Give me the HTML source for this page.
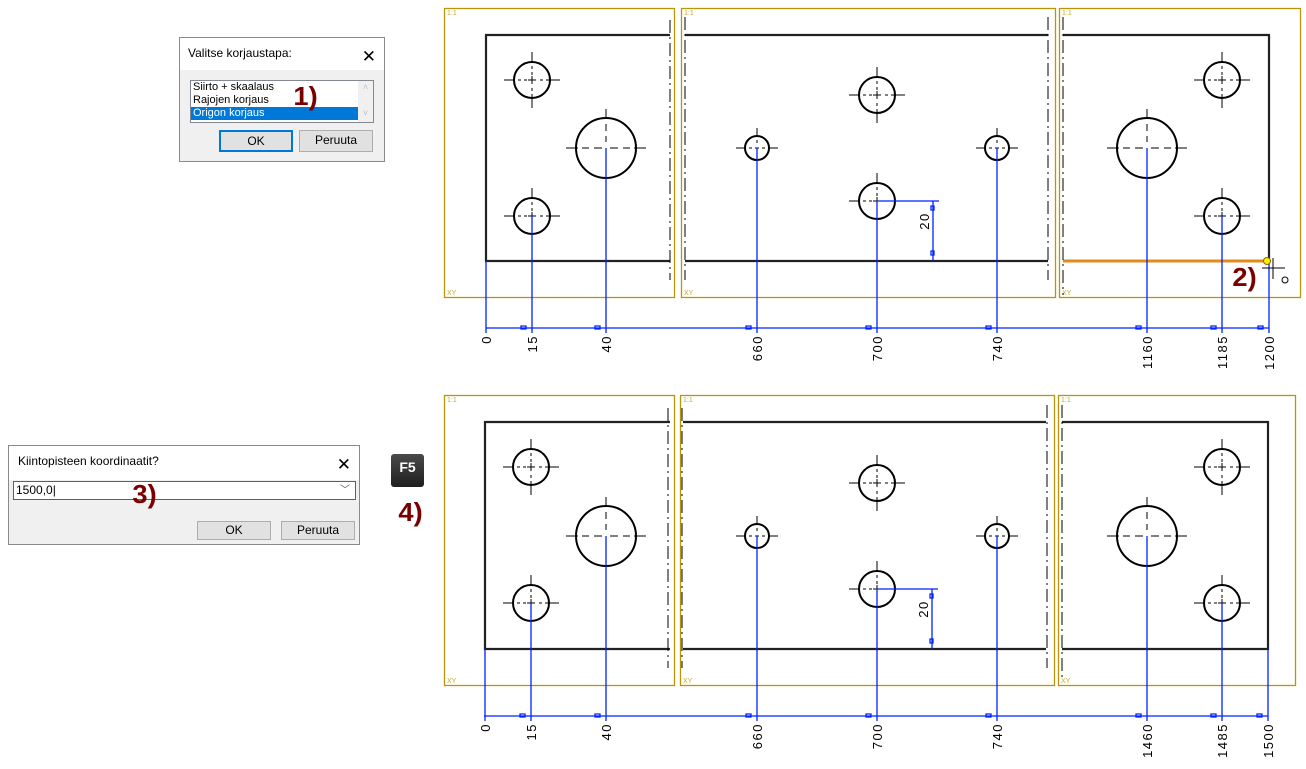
<!DOCTYPE html>
<html><head><meta charset="utf-8"><style>
body{margin:0;width:1306px;height:769px;background:#fff;overflow:hidden;position:relative;font-family:"Liberation Sans",Arial,sans-serif}
.dlg{position:absolute;background:#f0f0f0;border:1px solid #8a8a8a;box-sizing:border-box}
.tb{background:#fff;font-size:12px;color:#000;position:relative}
.x{position:absolute;right:8px;top:4px;font-size:17px;font-weight:300}
.btn{position:absolute;background:#e1e1e1;border:1px solid #adadad;box-sizing:border-box;font-size:12px;text-align:center;line-height:19px}
.lab{position:absolute;color:#7a0000;font-weight:bold;font-size:26px;transform:scaleX(1.05)}
</style></head><body>
<svg width="1306" height="769" style="position:absolute;left:0;top:0">
<defs>
<g id="c18"><circle r="18" fill="none" stroke="#000" stroke-width="2"/><path d="M-28 0h10M18 0h10M0-28v10M0 18v10M-4 0h8M0-4v8M-14 0h3M-8 0h3M8 0h3M14 0h3M0-14v3M0-8v3M0 8v3M0 14v3" stroke="#000"/></g>
<g id="c30"><circle r="30" fill="none" stroke="#000" stroke-width="2"/><path d="M-40 0h12M28 0h12M0-39v10M0 29v10M-24 0h7M-12 0h8M4 0h8M17 0h7M0-24v7M0-12v6M0 6v6M0 17v7" stroke="#000"/></g>
<g id="c12"><circle r="12" fill="none" stroke="#000" stroke-width="2"/><path d="M-21 0h9M12 0h9M0-20v7M0 13v7M-8 0h3M5 0h3M-2 0h4M0-8v3M0 5v3" stroke="#000"/></g>
</defs>
<g font-family="Liberation Sans,sans-serif">
<g fill="none" stroke="#b8960a" stroke-width="1.3">
<rect x="444.5" y="8.5" width="230" height="289"/><rect x="681.5" y="8.5" width="374" height="289"/><rect x="1059.5" y="8.5" width="241" height="289"/>
<rect x="444.5" y="395.5" width="230" height="290"/><rect x="680.5" y="395.5" width="374" height="290"/><rect x="1058.5" y="395.5" width="237" height="290"/>
</g>
<g fill="#c8a830" font-size="7"><text x="447" y="15">1:1</text><text x="447" y="295">XY</text><text x="684" y="15">1:1</text><text x="684" y="295">XY</text><text x="1062" y="15">1:1</text><text x="1062" y="295">XY</text>
<text x="447" y="402">1:1</text><text x="447" y="683">XY</text><text x="683" y="402">1:1</text><text x="683" y="683">XY</text><text x="1061" y="402">1:1</text><text x="1061" y="683">XY</text></g>
<g stroke="#222" stroke-width="2.2" fill="none">
<path d="M670 35H486V261H670M685 35H1048M685 261H1048M1063 35H1269V261"/>
<path d="M670 422H485V649H670M683 422H1046M683 649H1046M1062 422H1268V649H1062"/>
</g>
<path d="M1063 261H1267" stroke="#e08a1a" stroke-width="3"/>
<g stroke="#000" stroke-dasharray="13 4 2 4">
<path d="M670 20V280M685 17V280M1048 17V280M1063 17V295M668 408V668M682 408V668M1047 405V668M1062 405V678"/>
</g>
<use href="#c18" x="532" y="80"/><use href="#c30" x="606" y="148"/><use href="#c18" x="532" y="216"/>
<use href="#c18" x="877" y="95"/><use href="#c12" x="757" y="148"/><use href="#c12" x="997" y="148"/><use href="#c18" x="877" y="201"/>
<use href="#c18" x="1222" y="80"/><use href="#c30" x="1147" y="148"/><use href="#c18" x="1222" y="216"/>
<use href="#c18" x="531" y="467"/><use href="#c30" x="606" y="536"/><use href="#c18" x="531" y="603"/>
<use href="#c18" x="877" y="483"/><use href="#c12" x="757" y="536"/><use href="#c12" x="997" y="536"/><use href="#c18" x="877" y="589"/>
<use href="#c18" x="1222" y="467"/><use href="#c30" x="1147" y="536"/><use href="#c18" x="1222" y="603"/>
<g stroke="#0022ff" stroke-width="1.3" fill="none">
<path d="M486 328H1269M486 261V333M532 216V333M606 148V333M757 148V333M877 201V333M997 148V333M1147 148V333M1222 216V333M1269 261V333M877 201H939M933 201V261"/>
<path d="M484 716H1268M485 649V721M531 603V721M606 536V721M757 536V721M877 589V721M997 536V721M1147 536V721M1222 603V721M1268 649V721M877 589H938M932 589V649"/>
<path d="M521 326h5v3h-5zM595 326h5v3h-5zM746 326h5v3h-5zM866 326h5v3h-5zM986 326h5v3h-5zM1136 326h5v3h-5zM1211 326h5v3h-5zM1258 326h5v3h-5zM931 206v4h3v-4zM931 251v4h3v-4z"/>
<path d="M520 714h5v3h-5zM595 714h5v3h-5zM746 714h5v3h-5zM866 714h5v3h-5zM986 714h5v3h-5zM1136 714h5v3h-5zM1211 714h5v3h-5zM1257 714h5v3h-5zM930 594v4h3v-4zM930 639v4h3v-4z"/>
</g>
<g fill="#000" font-size="13" text-anchor="end" letter-spacing="1.5">
<text transform="translate(491,335) rotate(-90)">0</text><text transform="translate(537,335) rotate(-90)">15</text><text transform="translate(611,335) rotate(-90)">40</text><text transform="translate(762,335) rotate(-90)">660</text><text transform="translate(882,335) rotate(-90)">700</text><text transform="translate(1002,335) rotate(-90)">740</text><text transform="translate(1152,335) rotate(-90)">1160</text><text transform="translate(1227,335) rotate(-90)">1185</text><text transform="translate(1274,335) rotate(-90)">1200</text>
<text transform="translate(490,723) rotate(-90)">0</text><text transform="translate(536,723) rotate(-90)">15</text><text transform="translate(611,723) rotate(-90)">40</text><text transform="translate(762,723) rotate(-90)">660</text><text transform="translate(882,723) rotate(-90)">700</text><text transform="translate(1002,723) rotate(-90)">740</text><text transform="translate(1152,723) rotate(-90)">1460</text><text transform="translate(1227,723) rotate(-90)">1485</text><text transform="translate(1273,723) rotate(-90)">1500</text>
<text transform="translate(929,221) rotate(-90)" text-anchor="middle">20</text><text transform="translate(928,609) rotate(-90)" text-anchor="middle">20</text>
</g>
<circle cx="1267" cy="261" r="3.5" fill="#ffee00" stroke="#886600"/>
<path d="M1262 268H1285M1273 258V279" stroke="#000"/><circle cx="1285" cy="280" r="3" fill="none" stroke="#000"/>
</g>
</svg>

<div class="dlg" style="left:179px;top:37px;width:206px;height:125px">
<div class="tb" style="height:32px;line-height:30px;padding-left:8px">Valitse korjaustapa:<span class="x">✕</span></div>
<div style="position:absolute;left:10px;top:42px;width:184px;height:43px;background:#fff;border:1px solid #828790;box-sizing:border-box;font-size:11px;line-height:13px">
<div style="padding-left:2px">Siirto + skaalaus</div><div style="padding-left:2px">Rajojen korjaus</div><div style="padding-left:2px;background:#0078d7;color:#fff;width:166px">Origon korjaus</div>
<div style="position:absolute;right:0;top:0;width:15px;height:41px;background:#f0f0f0;color:#c0c0c0;font-size:9px;text-align:center">˄<br><br>˅</div></div>
<div class="btn" style="left:39px;top:92px;width:74px;height:22px;border:2px solid #0078d7;line-height:18px">OK</div>
<div class="btn" style="left:119px;top:92px;width:74px;height:22px">Peruuta</div>
</div>
<div class="lab" style="left:294px;top:81px">1)</div>
<div class="lab" style="left:1233px;top:262px">2)</div>

<div class="dlg" style="left:8px;top:445px;width:352px;height:100px">
<div class="tb" style="height:34px;line-height:30px;padding-left:9px">Kiintopisteen koordinaatit?<span class="x">✕</span></div>
<div style="position:absolute;left:4px;top:35px;width:343px;height:19px;background:#fff;border:1px solid #0078d7;box-sizing:border-box;font-size:12px;line-height:17px;padding-left:2px">1500,0|<span style="position:absolute;right:5px;top:0;color:#555;font-size:10px">﹀</span></div>
<div class="btn" style="left:188px;top:75px;width:74px;height:19px;line-height:17px">OK</div>
<div class="btn" style="left:272px;top:75px;width:74px;height:19px;line-height:17px">Peruuta</div>
</div>
<div class="lab" style="left:133px;top:479px">3)</div>
<div style="position:absolute;left:391px;top:454px;width:33px;height:33px;background:linear-gradient(#4a4a4a,#1e1e1e);border-radius:3px;color:#fff;font-weight:bold;font-size:14px;text-align:center;line-height:27px">F5</div>
<div class="lab" style="left:399px;top:497px">4)</div>
</body></html>
